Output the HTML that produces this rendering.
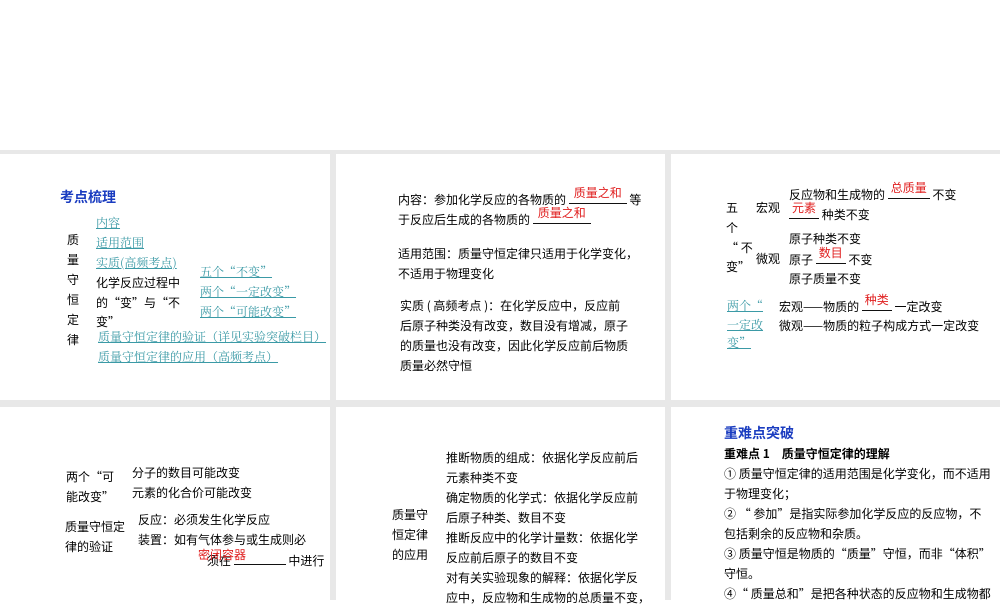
<!DOCTYPE html>
<html><head><meta charset="utf-8"><style>
*{margin:0;padding:0;box-sizing:border-box}
body{width:1000px;height:600px;background:#fff;position:relative;overflow:hidden;font-family:"Noto Sans CJK SC","Liberation Sans",sans-serif;font-size:12px;color:#000}
.bg{position:absolute;left:0;top:150px;width:1000px;height:450px;background:#e8e8e8}
.p{position:absolute;background:#fff}
.t{position:absolute;white-space:nowrap;line-height:16px}
.l{color:#3b9aa6;text-decoration:underline;font-family:"Noto Serif CJK SC","Liberation Serif",serif}
.r{color:#e02020}
.u{display:inline-block;border-bottom:1px solid #111;height:13px;vertical-align:baseline;position:relative}
.u span{position:absolute;left:0;right:0;top:-6px;text-align:center;color:#e02020}
.h{color:#1a3cc0;font-weight:bold;font-size:14px}
</style></head><body>
<div class="bg"></div>
<div class="p" style="left:0;top:154px;width:330px;height:246px"></div>
<div class="p" style="left:336px;top:154px;width:329px;height:246px"></div>
<div class="p" style="left:671px;top:154px;width:329px;height:246px"></div>
<div class="p" style="left:0;top:407px;width:330px;height:193px"></div>
<div class="p" style="left:336px;top:407px;width:329px;height:193px"></div>
<div class="p" style="left:671px;top:407px;width:329px;height:193px"></div>

<!-- panel 1 -->
<div class="t h" style="left:60px;top:189px">考点梳理</div>
<div class="t" style="left:67px;top:232px">质</div>
<div class="t" style="left:67px;top:252px">量</div>
<div class="t" style="left:67px;top:272px">守</div>
<div class="t" style="left:67px;top:292px">恒</div>
<div class="t" style="left:67px;top:312px">定</div>
<div class="t" style="left:67px;top:332px">律</div>
<div class="t l" style="left:96px;top:215px">内容</div>
<div class="t l" style="left:96px;top:235px">适用范围</div>
<div class="t l" style="left:96px;top:255px">实质(高频考点)</div>
<div class="t" style="left:96px;top:275px">化学反应过程中</div>
<div class="t" style="left:96px;top:295px">的“变”与“不</div>
<div class="t" style="left:96px;top:314px">变”</div>
<div class="t l" style="left:200px;top:264px">五个“不变”</div>
<div class="t l" style="left:200px;top:284px">两个“一定改变”</div>
<div class="t l" style="left:200px;top:304px">两个“可能改变”</div>
<div class="t l" style="left:98px;top:329px">质量守恒定律的验证（详见实验突破栏目）</div>
<div class="t l" style="left:98px;top:349px">质量守恒定律的应用（高频考点）</div>

<!-- panel 2 -->
<div class="t" style="left:398px;top:191px">内容：参加化学反应的各物质的 <span class="u" style="width:58px"><span>质量之和</span></span> 等</div>
<div class="t" style="left:398px;top:211px">于反应后生成的各物质的 <span class="u" style="width:58px"><span>质量之和</span></span></div>
<div class="t" style="left:398px;top:246px">适用范围：质量守恒定律只适用于化学变化，</div>
<div class="t" style="left:398px;top:266px">不适用于物理变化</div>
<div class="t" style="left:400px;top:298px">实质 ( 高频考点 )：在化学反应中，反应前</div>
<div class="t" style="left:400px;top:318px">后原子种类没有改变，数目没有增减，原子</div>
<div class="t" style="left:400px;top:338px">的质量也没有改变，因此化学反应前后物质</div>
<div class="t" style="left:400px;top:358px">质量必然守恒</div>

<!-- panel 3 -->
<div class="t" style="left:789px;top:186px">反应物和生成物的 <span class="u" style="width:42px"><span>总质量</span></span> 不变</div>
<div class="t" style="left:789px;top:206px"><span class="u" style="width:30px"><span>元素</span></span> 种类不变</div>
<div class="t" style="left:726px;top:200px">五</div>
<div class="t" style="left:756px;top:200px">宏观</div>
<div class="t" style="left:726px;top:220px">个</div>
<div class="t" style="left:726px;top:240px">“ 不</div>
<div class="t" style="left:726px;top:259px">变”</div>
<div class="t" style="left:756px;top:251px">微观</div>
<div class="t" style="left:789px;top:231px">原子种类不变</div>
<div class="t" style="left:789px;top:251px">原子 <span class="u" style="width:30px"><span>数目</span></span> 不变</div>
<div class="t" style="left:789px;top:271px">原子质量不变</div>
<div class="t l" style="left:727px;top:298px">两个“</div>
<div class="t l" style="left:727px;top:317px">一定改</div>
<div class="t l" style="left:727px;top:335px">变”</div>
<div class="t" style="left:779px;top:298px">宏观——物质的 <span class="u" style="width:30px"><span>种类</span></span> 一定改变</div>
<div class="t" style="left:779px;top:318px">微观——物质的粒子构成方式一定改变</div>

<!-- panel 4 -->
<div class="t" style="left:66px;top:469px">两个“可</div>
<div class="t" style="left:66px;top:489px">能改变”</div>
<div class="t" style="left:132px;top:465px">分子的数目可能改变</div>
<div class="t" style="left:132px;top:485px">元素的化合价可能改变</div>
<div class="t" style="left:65px;top:519px">质量守恒定</div>
<div class="t" style="left:65px;top:539px">律的验证</div>
<div class="t" style="left:138px;top:512px">反应：必须发生化学反应</div>
<div class="t" style="left:138px;top:532px">装置：如有气体参与或生成则必</div>
<div class="t" style="left:207px;top:552px">须在 <span class="u" style="width:52px"></span> 中进行</div>
<div class="t r" style="left:198px;top:547px">密闭容器</div>

<!-- panel 5 -->
<div class="t" style="left:392px;top:507px">质量守</div>
<div class="t" style="left:392px;top:527px">恒定律</div>
<div class="t" style="left:392px;top:547px">的应用</div>
<div class="t" style="left:446px;top:450px">推断物质的组成：依据化学反应前后</div>
<div class="t" style="left:446px;top:470px">元素种类不变</div>
<div class="t" style="left:446px;top:490px">确定物质的化学式：依据化学反应前</div>
<div class="t" style="left:446px;top:510px">后原子种类、数目不变</div>
<div class="t" style="left:446px;top:530px">推断反应中的化学计量数：依据化学</div>
<div class="t" style="left:446px;top:550px">反应前后原子的数目不变</div>
<div class="t" style="left:446px;top:570px">对有关实验现象的解释：依据化学反</div>
<div class="t" style="left:446px;top:590px">应中，反应物和生成物的总质量不变，</div>

<!-- panel 6 -->
<div class="t h" style="left:724px;top:425px">重难点突破</div>
<div class="t" style="left:724px;top:446px;font-weight:bold">重难点 1　质量守恒定律的理解</div>
<div class="t" style="left:724px;top:466px">① 质量守恒定律的适用范围是化学变化，而不适用</div>
<div class="t" style="left:724px;top:486px">于物理变化；</div>
<div class="t" style="left:724px;top:506px">② “ 参加”是指实际参加化学反应的反应物，不</div>
<div class="t" style="left:724px;top:526px">包括剩余的反应物和杂质。</div>
<div class="t" style="left:724px;top:546px">③ 质量守恒是物质的“质量”守恒，而非“体积”</div>
<div class="t" style="left:724px;top:566px">守恒。</div>
<div class="t" style="left:724px;top:586px">④“ 质量总和”是把各种状态的反应物和生成物都</div>
</body></html>
